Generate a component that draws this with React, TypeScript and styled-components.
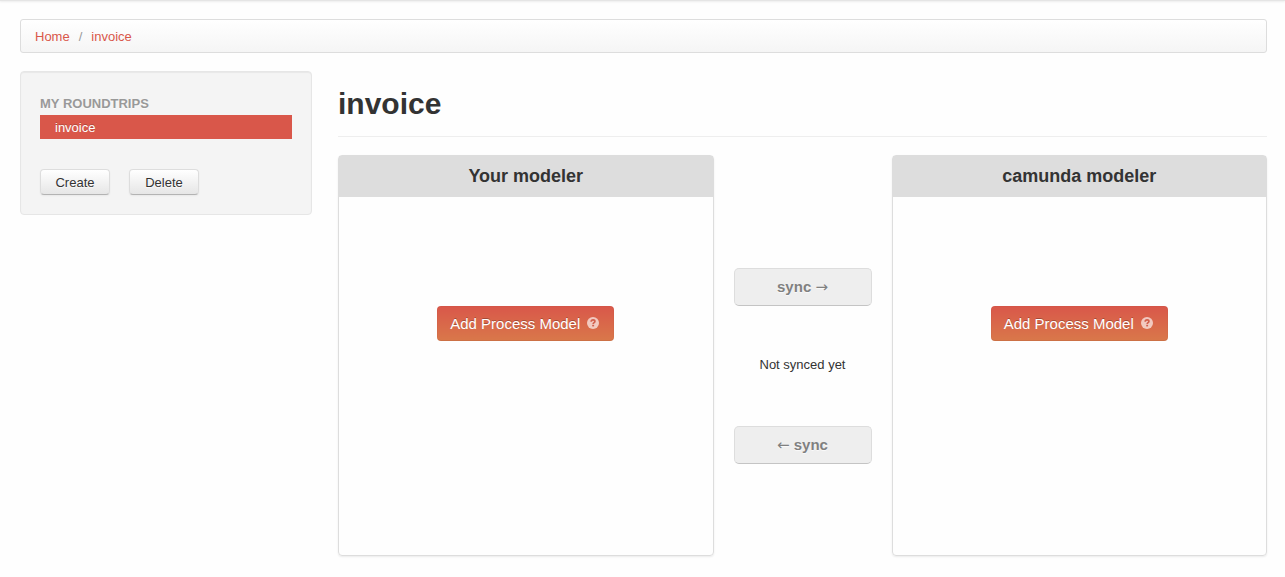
import React from "react";
import styled, { createGlobalStyle } from "styled-components";

const GlobalStyle = createGlobalStyle`
  *, *::before, *::after { box-sizing: border-box; }
  body {
    margin: 0;
    background: #fefefe;
    color: #333;
    font: 13px/18px "Liberation Sans", Arial, sans-serif;
  }
`;

const TopEdge = styled.header`
  height: 1px;
  background: #e5e5e5;
  box-shadow: 0 1px 2px rgba(0, 0, 0, 0.1);
`;

const Page = styled.div`
  padding: 18px 18px 20px 20px;
`;

const Breadcrumb = styled.nav`
  padding: 8px 14px 6px;
  margin-bottom: 18px;
  border: 1px solid #ddd;
  border-radius: 3px;
  background: linear-gradient(#fff, #f5f5f5);
  box-shadow: inset 0 1px 0 #fff;

  ol {
    display: flex;
    margin: 0;
    padding: 0;
    list-style: none;
  }
  li + li::before {
    content: "/";
    padding: 0 9px;
    color: #999;
  }
  a {
    color: #d9574a;
    text-decoration: none;
  }
`;

const Columns = styled.div`
  display: grid;
  grid-template-columns: 292px 1fr;
  gap: 26px;
  align-items: start;
`;

const Sidebar = styled.aside`
  padding: 19px;
  border: 1px solid #e6e6e6;
  border-radius: 4px;
  background: #f4f4f4;
  box-shadow: inset 0 1px 1px rgba(0, 0, 0, 0.05);
`;

const SidebarTitle = styled.h2`
  margin: 0;
  padding: 4px 0 2px;
  font-size: 13px;
  line-height: 18px;
  color: #999;
  text-shadow: 0 1px 0 rgba(255, 255, 255, 0.5);
  text-transform: uppercase;
`;

const RoundtripLink = styled.a`
  display: block;
  padding: 4px 15px 2px;
  color: #fff;
  background: #d9574a;
  text-decoration: none;
  text-shadow: 0 -1px 0 rgba(0, 0, 0, 0.2);
`;

const Actions = styled.div`
  display: flex;
  gap: 19px;
  margin-top: 30px;
`;

const SmallButton = styled.button`
  min-width: 70px;
  height: 26px;
  padding: 2px 14px 0;
  border: 1px solid #ddd;
  border-bottom-color: #b3b3b3;
  border-radius: 4px;
  background: linear-gradient(#fff, #e6e6e6);
  box-shadow: inset 0 1px 0 rgba(255, 255, 255, 0.2), 0 1px 2px rgba(0, 0, 0, 0.05);
  color: #333;
  font: inherit;
  text-shadow: 0 1px 1px rgba(255, 255, 255, 0.75);
`;

const PageHeader = styled.div`
  padding: 15px 0 14px;
  margin-bottom: 18px;
  border-bottom: 1px solid #eee;

  h1 {
    margin: 0;
    font-size: 30px;
    line-height: 36px;
  }
`;

const Workspace = styled.div`
  display: grid;
  grid-template-columns: 1fr 138px 1fr;
  gap: 20px;
`;

const Panel = styled.section`
  min-height: 401px;
  border: 1px solid #ddd;
  border-radius: 4px;
  box-shadow: 0 1px 2px rgba(0, 0, 0, 0.08);
`;

const PanelTitle = styled.h3`
  margin: 0;
  font-size: 18px;
  line-height: 41px;
  text-align: center;
  background: #ddd;
`;

const PanelBody = styled.div`
  display: flex;
  justify-content: center;
  padding-top: 109px;
`;

const AddButton = styled.button`
  display: flex;
  align-items: center;
  justify-content: center;
  gap: 7px;
  width: 177px;
  height: 35px;
  padding: 0 2px 0 0;
  border: 1px solid;
  border-color: rgba(0, 0, 0, 0.02) rgba(0, 0, 0, 0.02) rgba(0, 0, 0, 0.06);
  border-radius: 4px;
  background: linear-gradient(#d9574a, #d9784a) border-box;
  color: #fff;
  font: inherit;
  font-size: 15px;
  text-shadow: 0 -1px 0 rgba(0, 0, 0, 0.25);
`;

const SyncColumn = styled.div`
  display: flex;
  flex-direction: column;
  padding-top: 113px;
`;

const SyncButton = styled.button`
  height: 38px;
  padding: 0;
  border: 1px solid #ddd;
  border-bottom-color: #c4c4c4;
  border-radius: 5px;
  background: #eee;
  color: #808080;
  font: inherit;
  font-size: 15px;
  font-weight: bold;
  text-shadow: 0 1px 1px rgba(255, 255, 255, 0.75);
`;

const Arrow = styled.span`
  font-family: "DejaVu Sans", sans-serif;
  font-weight: normal;
`;

const SyncStatus = styled.p`
  margin: 50px 0 52px;
  text-align: center;
`;

const HelpIcon = () => (
  <svg width="12" height="14" viewBox="0 0 12 14" aria-hidden="true">
    <circle cx="6" cy="6" r="6" fill="#fff" fillOpacity="0.65" />
    <path
      d="M4.2 4.8C4.2 3.5 5 2.9 6.1 2.9s1.8.6 1.8 1.5c0 1.2-1.7 1.2-1.7 2.5"
      fill="none"
      stroke="#d2604c"
      strokeWidth="1.7"
    />
    <rect x="5.2" y="7.8" width="1.9" height="1.6" fill="#d2604c" />
  </svg>
);

const ModelerPanel = ({ title }: { title: string }) => (
  <Panel>
    <PanelTitle>{title}</PanelTitle>
    <PanelBody>
      <AddButton type="button">
        Add Process Model
        <HelpIcon />
      </AddButton>
    </PanelBody>
  </Panel>
);

export default function App() {
  return (
    <>
      <GlobalStyle />
      <TopEdge />
      <Page>
        <Breadcrumb aria-label="Breadcrumb">
          <ol>
            <li><a href="#home">Home</a></li>
            <li><a href="#invoice">invoice</a></li>
          </ol>
        </Breadcrumb>
        <Columns>
          <Sidebar>
            <SidebarTitle>My Roundtrips</SidebarTitle>
            <RoundtripLink href="#invoice">invoice</RoundtripLink>
            <Actions>
              <SmallButton type="button">Create</SmallButton>
              <SmallButton type="button">Delete</SmallButton>
            </Actions>
          </Sidebar>
          <main>
            <PageHeader>
              <h1>invoice</h1>
            </PageHeader>
            <Workspace>
              <ModelerPanel title="Your modeler" />
              <SyncColumn>
                <SyncButton type="button" disabled>sync <Arrow>→</Arrow></SyncButton>
                <SyncStatus>Not synced yet</SyncStatus>
                <SyncButton type="button" disabled><Arrow>←</Arrow> sync</SyncButton>
              </SyncColumn>
              <ModelerPanel title="camunda modeler" />
            </Workspace>
          </main>
        </Columns>
      </Page>
    </>
  );
}
